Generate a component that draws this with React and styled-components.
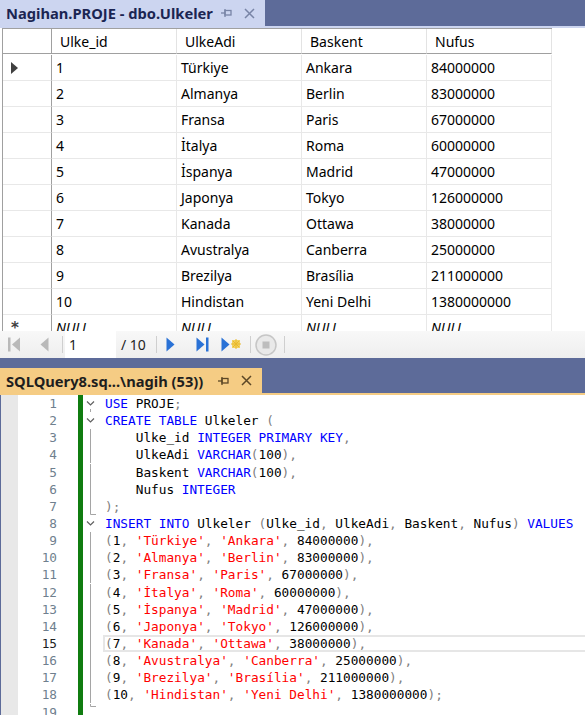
import React from 'react'
import styled, { createGlobalStyle } from 'styled-components'

const GlobalStyle = createGlobalStyle`
  html, body {
    margin: 0;
    padding: 0;
    background: #5d6b99;
    overflow: hidden;
  }
`

const rows = [
  [1, 'Türkiye', 'Ankara', 84000000],
  [2, 'Almanya', 'Berlin', 83000000],
  [3, 'Fransa', 'Paris', 67000000],
  [4, 'İtalya', 'Roma', 60000000],
  [5, 'İspanya', 'Madrid', 47000000],
  [6, 'Japonya', 'Tokyo', 126000000],
  [7, 'Kanada', 'Ottawa', 38000000],
  [8, 'Avustralya', 'Canberra', 25000000],
  [9, 'Brezilya', 'Brasília', 211000000],
  [10, 'Hindistan', 'Yeni Delhi', 1380000000],
]

const columns = ['Ulke_id', 'UlkeAdi', 'Baskent', 'Nufus']

// k = keyword, s = string, p = punctuation, t = plain text
const codeLines = [
  [['k', 'USE'], ['t', ' PROJE'], ['p', ';']],
  [['k', 'CREATE TABLE'], ['t', ' Ulkeler '], ['p', '(']],
  [['t', '    Ulke_id '], ['k', 'INTEGER PRIMARY KEY'], ['p', ',']],
  [['t', '    UlkeAdi '], ['k', 'VARCHAR'], ['p', '('], ['t', '100'], ['p', '),']],
  [['t', '    Baskent '], ['k', 'VARCHAR'], ['p', '('], ['t', '100'], ['p', '),']],
  [['t', '    Nufus '], ['k', 'INTEGER']],
  [['p', ');']],
  [
    ['k', 'INSERT INTO'], ['t', ' Ulkeler '], ['p', '('], ['t', 'Ulke_id'], ['p', ', '],
    ['t', 'UlkeAdi'], ['p', ', '], ['t', 'Baskent'], ['p', ', '], ['t', 'Nufus'], ['p', ') '], ['k', 'VALUES'],
  ],
  ...rows.map((r, i) => [
    ['p', '('], ['t', String(r[0])], ['p', ', '], ['s', `'${r[1]}'`], ['p', ', '],
    ['s', `'${r[2]}'`], ['p', ', '], ['t', String(r[3])], ['p', i === rows.length - 1 ? ');' : '),'],
  ]),
  [],
]

const folds = ['openDash', 'open', 'line', 'line', 'line', 'line', 'endBottom', 'open',
  'line', 'line', 'line', 'line', 'line', 'line', 'line', 'line', 'line', 'line', 'endTop']

const CURRENT_LINE = 15

const Window = styled.div`
  width: 585px;
  height: 715px;
  display: flex;
  flex-direction: column;
  background: #5d6b99;
  overflow: hidden;
`

const TabRow = styled.div`
  display: flex;
  flex-shrink: 0;
  height: ${p => p.$h}px;
`

const Tab = styled.div`
  display: flex;
  align-items: center;
  width: ${p => p.$w}px;
  padding-left: 6px;
  box-sizing: border-box;
  background: ${p => p.$bg};
  color: ${p => p.$fg};
  font: bold 14.7px "Noto Sans", sans-serif;
  white-space: nowrap;
`

const TabTitle = styled.span`
  flex: 1;
`

const TabIcons = styled.div`
  display: flex;
  align-items: center;
  gap: 12px;
  margin-right: 10px;
`

const Strip = styled.div`
  height: 2px;
  flex-shrink: 0;
  background: ${p => p.$bg};
`

const GridArea = styled.div`
  height: 303px;
  flex-shrink: 0;
  background: #fff;
  padding-left: 2px;
  overflow: hidden;
`

const Table = styled.div`
  display: grid;
  grid-template-columns: 49px repeat(4, 125px);
  grid-auto-rows: 26px;
  width: 549px;
  border-left: 1px solid #a0a0a0;
  border-top: 1px solid #a0a0a0;
  font: 14px "Noto Sans", sans-serif;
  color: #000;
`

const HeadCell = styled.div`
  display: flex;
  align-items: center;
  padding-left: 8px;
  box-sizing: border-box;
  height: 25px;
  border-bottom: 1px solid #a0a0a0;
  border-right: 1px solid ${p => (p.$rowHead ? '#a0a0a0' : '#e3e3e3')};
  white-space: nowrap;
`

const Cell = styled.div`
  display: flex;
  align-items: center;
  padding-left: 4px;
  box-sizing: border-box;
  border-bottom: 1px solid #e8e8e8;
  border-right: 1px solid #e8e8e8;
  font-style: ${p => (p.$null ? 'italic' : 'normal')};
  white-space: nowrap;
`

const RowHead = styled.div`
  display: flex;
  align-items: center;
  padding-left: 8px;
  box-sizing: border-box;
  border-bottom: 1px solid #e8e8e8;
  border-right: 1px solid #a0a0a0;
  font: bold 15px "DejaVu Sans", sans-serif;
  color: #404040;
`

const Toolbar = styled.div`
  height: 27px;
  flex-shrink: 0;
  display: flex;
  align-items: stretch;
  padding-left: 2px;
  background: linear-gradient(#f8f8f8, #eeeeee);
  font: 14px "Noto Sans", sans-serif;
  color: #1e1e1e;
`

const ToolButton = styled.div`
  width: 24px;
  display: flex;
  align-items: center;
  justify-content: center;
  margin-left: ${p => p.$ml || 0}px;
`

const ToolSep = styled.div`
  width: 1px;
  margin: 5px 0 5px ${p => p.$ml || 0}px;
  background: #cfcfcf;
`

const PageInput = styled.div`
  width: 51px;
  margin-left: 2px;
  padding-left: 4px;
  box-sizing: border-box;
  background: #fff;
  display: flex;
  align-items: center;
`

const PageTotal = styled.div`
  display: flex;
  align-items: center;
  margin-left: 5px;
  width: 30px;
`

const Gap = styled.div`
  height: 10px;
  flex-shrink: 0;
`

const Editor = styled.div`
  flex: 1;
  background: #fff;
  border-left: 1px solid #5d6b99;
  overflow: hidden;
  font: 12.75px "DejaVu Sans Mono", monospace;
`

const Line = styled.div`
  display: flex;
  height: 17.15px;
  line-height: 17.15px;
`

const SelMargin = styled.div`
  width: 17px;
  flex-shrink: 0;
  background: #e8e8e8;
`

const LineNo = styled.div`
  width: 60px;
  flex-shrink: 0;
  padding-right: 21px;
  box-sizing: border-box;
  text-align: right;
  color: ${p => (p.$current ? '#1e1e1e' : '#6f7f8e')};
`

const ChangeBar = styled.div`
  width: 5px;
  flex-shrink: 0;
  background: #107c10;
`

const FoldCell = styled.div`
  width: 22px;
  flex-shrink: 0;
  display: flex;
`

const CodeText = styled.div`
  flex: 1;
  white-space: pre;
  box-sizing: border-box;
  margin-left: ${p => (p.$current ? -2 : 0)}px;
  border: ${p => (p.$current ? '2px solid #e6e6e6' : 'none')};
  border-right: none;
  line-height: ${p => (p.$current ? '13.15px' : '17.15px')};
`

const Tok = styled.span`
  color: ${p => ({ k: '#0000ff', s: '#ff0000', p: '#808080', t: '#000000' }[p.$kind])};
`

function PinIcon({ color }) {
  return (
    <svg width="11" height="10" viewBox="0 0 11 10">
      <g stroke={color} strokeWidth="1.3" fill="none">
        <path d="M0 5H4" />
        <path d="M4 1V9" />
        <rect x="4" y="2.5" width="6" height="4.5" />
      </g>
    </svg>
  )
}

function CloseIcon({ color }) {
  return (
    <svg width="11" height="11" viewBox="0 0 11 11">
      <path d="M1 1L10 10M10 1L1 10" stroke={color} strokeWidth="1.5" />
    </svg>
  )
}

function Fold({ kind }) {
  const c = '#a5a5a5'
  return (
    <FoldCell>
      <svg width="22" height="17" viewBox="0 0 22 17">
        {(kind === 'open' || kind === 'openDash') && (
          <path d="M4 6.5L7.5 10L11 6.5" stroke="#606060" strokeWidth="1.2" fill="none" />
        )}
        {kind === 'openDash' && <path d="M7.5 14V17" stroke={c} strokeWidth="1" />}
        {kind === 'line' && <path d="M7.5 0V17" stroke={c} strokeWidth="1" />}
        {kind === 'endBottom' && <path d="M7.5 0V16.5H13" stroke={c} strokeWidth="1" fill="none" />}
        {kind === 'endTop' && <path d="M7.5 0V2.5H13" stroke={c} strokeWidth="1" fill="none" />}
      </svg>
    </FoldCell>
  )
}

function NavIcon({ type }) {
  const gray = '#b9b9b9'
  const blue = '#2a72d6'
  if (type === 'first')
    return (
      <svg width="13" height="15" viewBox="0 0 13 15">
        <rect x="0" y="0.5" width="2.5" height="14" fill={gray} />
        <path d="M12 0.5V14.5L4 7.5Z" fill={gray} />
      </svg>
    )
  if (type === 'prev')
    return (
      <svg width="9" height="15" viewBox="0 0 9 15">
        <path d="M8.5 0.5V14.5L0.5 7.5Z" fill={gray} />
      </svg>
    )
  if (type === 'next')
    return (
      <svg width="9" height="15" viewBox="0 0 9 15">
        <path d="M0.5 0.5V14.5L8.5 7.5Z" fill={blue} />
      </svg>
    )
  if (type === 'last')
    return (
      <svg width="13" height="15" viewBox="0 0 13 15">
        <path d="M0.5 0.5V14.5L8.5 7.5Z" fill={blue} />
        <rect x="10" y="0.5" width="2.5" height="14" fill={blue} />
      </svg>
    )
  if (type === 'new')
    return (
      <svg width="21" height="15" viewBox="0 0 21 15">
        <path d="M0.5 0.5V14.5L8.5 7.5Z" fill={blue} />
        <rect x="11" y="3" width="8" height="8" fill="#f3d15f" />
        <path d="M15 2V12M10 7H20M12 4L18 10M18 4L12 10" stroke="#e8b92c" strokeWidth="1" />
      </svg>
    )
  return (
    <svg width="22" height="22" viewBox="0 0 22 22">
      <circle cx="11" cy="11" r="10" fill="#e9e9e9" stroke="#c6c6c6" strokeWidth="1.5" />
      <rect x="7.5" y="7.5" width="7" height="7" fill="#bdbdbd" />
    </svg>
  )
}

export default function App() {
  return (
    <Window>
      <GlobalStyle />

      <TabRow $h={26}>
        <Tab $w={265} $bg="#ccd5f0" $fg="#1b2552">
          <TabTitle>Nagihan.PROJE - dbo.Ulkeler</TabTitle>
          <TabIcons>
            <PinIcon color="#7884a6" />
            <CloseIcon color="#7884a6" />
          </TabIcons>
        </Tab>
      </TabRow>
      <Strip $bg="#ccd5f0" />

      <GridArea>
        <Table>
          <HeadCell $rowHead />
          {columns.map(c => (
            <HeadCell key={c}>{c}</HeadCell>
          ))}
          {rows.map((r, i) => (
            <React.Fragment key={r[0]}>
              <RowHead>{i === 0 ? <svg width="8" height="12"><path d="M0 0V12L7 6Z" fill="#404040" /></svg> : null}</RowHead>
              {r.map((v, j) => (
                <Cell key={j}>{v}</Cell>
              ))}
            </React.Fragment>
          ))}
          <RowHead>*</RowHead>
          {columns.map(c => (
            <Cell key={c} $null>NULL</Cell>
          ))}
        </Table>
      </GridArea>

      <Toolbar>
        <ToolButton><NavIcon type="first" /></ToolButton>
        <ToolButton $ml={6}><NavIcon type="prev" /></ToolButton>
        <ToolSep $ml={6} />
        <PageInput>1</PageInput>
        <PageTotal>/ 10</PageTotal>
        <ToolSep $ml={5} />
        <ToolButton $ml={1}><NavIcon type="next" /></ToolButton>
        <ToolButton $ml={8}><NavIcon type="last" /></ToolButton>
        <ToolButton $ml={5}><NavIcon type="new" /></ToolButton>
        <ToolSep $ml={7} />
        <ToolButton $ml={3}><NavIcon type="stop" /></ToolButton>
        <ToolSep $ml={6} />
      </Toolbar>

      <Gap />

      <TabRow $h={25}>
        <Tab $w={262} $bg="#f5cc84" $fg="#1e1e1e">
          <TabTitle>SQLQuery8.sq...\nagih (53))</TabTitle>
          <TabIcons>
            <PinIcon color="#5c4726" />
            <CloseIcon color="#5c4726" />
          </TabIcons>
        </Tab>
      </TabRow>
      <Strip $bg="#f5cc84" />

      <Editor>
        {codeLines.map((toks, i) => {
          const n = i + 1
          const current = n === CURRENT_LINE
          return (
            <Line key={n}>
              <SelMargin />
              <LineNo $current={current}>{n}</LineNo>
              <ChangeBar />
              <Fold kind={folds[i]} />
              <CodeText $current={current}>
                {toks.map(([k, s], j) => (
                  <Tok key={j} $kind={k}>{s}</Tok>
                ))}
              </CodeText>
            </Line>
          )
        })}
      </Editor>
    </Window>
  )
}
